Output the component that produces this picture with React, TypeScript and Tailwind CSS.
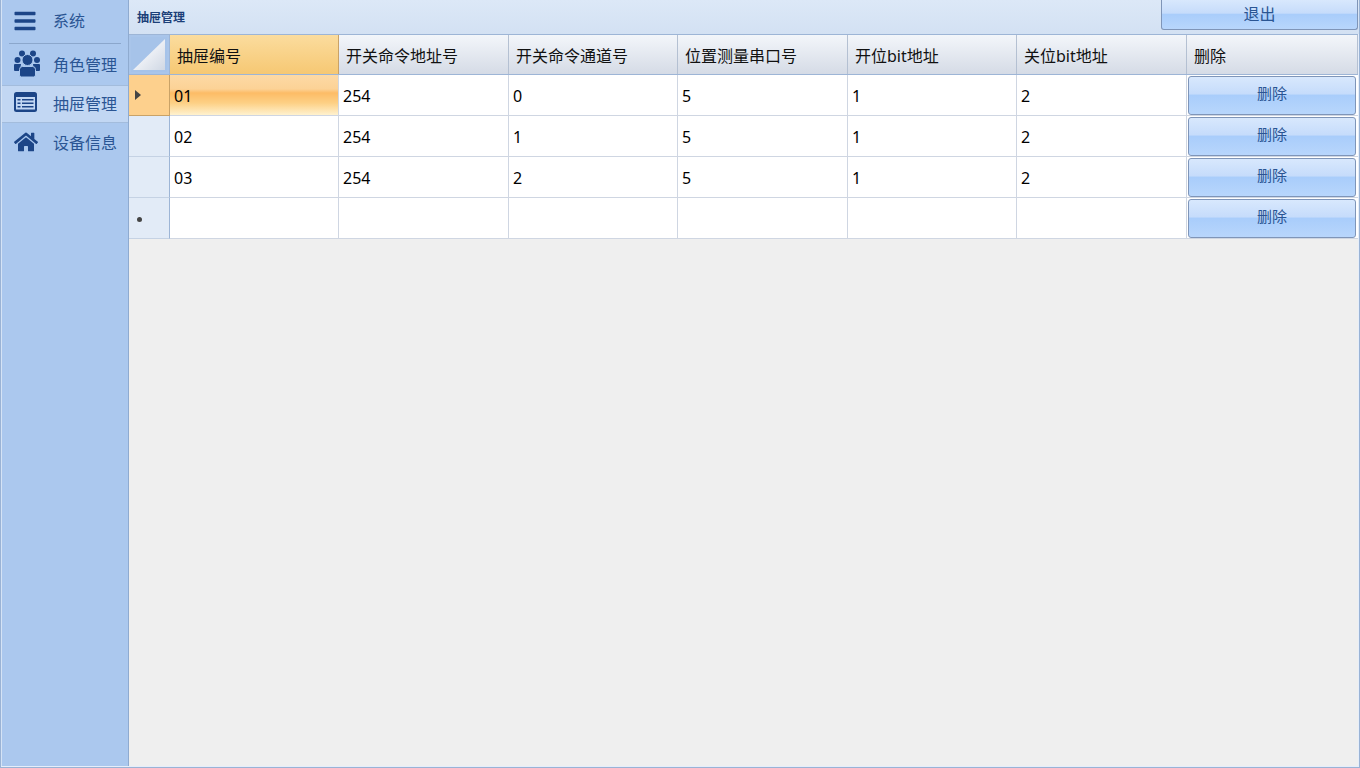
import { FaBars, FaHome } from "react-icons/fa";
import type { ReactNode } from "react";

const columns = ["抽屉编号", "开关命令地址号", "开关命令通道号", "位置测量串口号", "开位bit地址", "关位bit地址", "删除"];

const rows = [
  ["01", "254", "0", "5", "1", "2"],
  ["02", "254", "1", "5", "1", "2"],
  ["03", "254", "2", "5", "1", "2"],
  ["", "", "", "", "", ""],
];

const gridCols = "grid grid-cols-[41px_169px_170px_169px_170px_169px_170px_171px]";

// ── Icons ───────────────────────────────────────────────────────────────────

function UsersIcon() {
  return (
    <svg width="26" height="27" viewBox="0 0 26 27" fill="currentColor">
      <circle cx="8" cy="3.5" r="3" />
      <circle cx="19" cy="3.5" r="3" />
      <circle cx="3.5" cy="10" r="3" />
      <circle cx="23" cy="10" r="3" />
      <circle cx="13.5" cy="10" r="5.5" stroke="#abc8ee" strokeWidth="1" />
      <path d="M1 14h6l-1 7H1a1 1 0 0 1-1-1v-5a1 1 0 0 1 1-1zM20 14h5a1 1 0 0 1 1 1v5a1 1 0 0 1-1 1h-5l-1-7z" />
      <path d="M8.5 16.5h10a3 3 0 0 1 3 3V25a2 2 0 0 1-2 2h-12a2 2 0 0 1-2-2v-5.500a3 3 0 0 1 3-3z" stroke="#abc8ee" strokeWidth="1" />
    </svg>
  );
}

function ListCardIcon() {
  return (
    <svg width="23" height="20" viewBox="0 0 23 20">
      <rect width="23" height="20" rx="2.500" fill="currentColor" />
      <rect x="2" y="5" width="19" height="12.500" fill="#c2d7f3" />
      <path d="M3.500 7h3v1.500h-3zM3.500 10.500h3V12h-3zM3.500 14h3v1.500h-3zM8 7h11.500v1.500H8zM8 10.500h11.500V12H8zM8 14h11.500v1.500H8z" fill="currentColor" />
    </svg>
  );
}

// ── Sidebar ─────────────────────────────────────────────────────────────────

function NavItem({ icon, label, active, className }: { icon: ReactNode; label: string; active?: boolean; className: string }) {
  return (
    <div className={`flex pl-[11px] ${active ? "bg-[#c2d7f3]" : ""} ${className}`}>
      <div className="w-[40px] pl-[1px] text-[#1c4587]">{icon}</div>
      <span className="text-base leading-[22px] text-[#2a5593]">{label}</span>
    </div>
  );
}

function Sidebar() {
  return (
    <div className="w-[128px] shrink-0 border-r border-l border-r-[#8fabd0] border-l-[#d5e3f5] bg-[#abc8ee]">
      <NavItem className="h-[43px] pt-[10px]" icon={<FaBars className="-mt-[1px] h-[24px] w-[22px]" />} label="系统" />
      <div className="mx-[7px] h-px bg-[#8ba7cc]" />
      <NavItem className="h-[41px] pt-[10px]" icon={<div className="-mt-[4px]"><UsersIcon /></div>} label="角色管理" />
      <NavItem active className="h-[38px] border-y border-[#a3bcdc] pt-[7px]" icon={<div className="-mt-[1px]"><ListCardIcon /></div>} label="抽屉管理" />
      <NavItem className="h-[40px] pt-[9px]" icon={<FaHome className="-mt-[2px] h-[24px] w-[24px]" />} label="设备信息" />
    </div>
  );
}

// ── Table ───────────────────────────────────────────────────────────────────

function DeleteButton() {
  return (
    <button className="h-[39px] w-[168px] rounded-[3px] border border-[#7f95b8] bg-[linear-gradient(to_bottom,#d8e8fd_0%,#c6dcfb_45%,#a9cdfb_50%,#b8d6fc_100%)] pb-[3px] text-[15px] text-[#2a5593]">
      删除
    </button>
  );
}

function HeaderRow() {
  return (
    <div className={`${gridCols} h-[41px] border-y border-[#9db5d6]`}>
      <div className="flex items-center justify-center border-r border-[#9db5d6] bg-[#a9c5ea] p-[2px]">
        <svg width="36" height="35" viewBox="0 0 36 35">
          <defs>
            <linearGradient id="corner" x1="0" y1="0" x2="1" y2="1">
              <stop offset="0.4" stopColor="#f2f4f8" />
              <stop offset="1" stopColor="#cfd7e4" />
            </linearGradient>
          </defs>
          <rect width="36" height="35" fill="#a6c3e9" />
          <polygon points="34,2 34,33 2,33" fill="url(#corner)" />
        </svg>
      </div>
      {columns.map((col, i) => (
        <div
          key={col}
          className={`border-r pt-[9px] pl-[7px] text-base leading-[24px] text-[#111] ${
            i === 0
              ? "border-[#c9a267] bg-[linear-gradient(to_bottom,#fbdc9e,#f6c873)]"
              : "border-[#b4c0d2] bg-[linear-gradient(to_bottom,#f3f6fa,#d5dbe6)]"
          }`}
        >
          {col}
        </div>
      ))}
    </div>
  );
}

function DataRow({ cells, index }: { cells: string[]; index: number }) {
  const selected = index === 0;
  const isNew = index === rows.length - 1;
  return (
    <div className={`${gridCols} h-[41px]`}>
      <div
        className={`flex items-center border-r border-b pl-[5px] ${
          selected ? "border-[#c9a267] bg-[#fdd08d]" : "border-[#c5d2e4] bg-[#e2ebf7] border-r-[#9db5d6]"
        }`}
      >
        {selected && <div className="ml-[1px] h-0 w-0 border-y-[5px] border-l-[6px] border-y-transparent border-l-[#444]" />}
        {isNew && <div className="mt-[3px] ml-[3px] h-[5px] w-[5px] rounded-full bg-[#444]" />}
      </div>
      {cells.map((cell, i) => (
        <div
          key={i}
          className={`border-r border-b border-[#cfd6e2] pt-[9px] pl-[4px] text-base leading-[24px] text-black ${
            selected && i === 0 ? "bg-[linear-gradient(to_bottom,#fdd9a5_0%,#fcd296_35%,#fdbc66_45%,#fdd085_70%,#fff2cf_100%)]" : "bg-white"
          }`}
        >
          {cell}
        </div>
      ))}
      <div className="flex items-center justify-start border-b border-[#cfd6e2] bg-white pl-[1px]">
        <DeleteButton />
      </div>
    </div>
  );
}

export default function App() {
  return (
    <div
      className="h-[768px] w-[1360px] overflow-hidden border-x border-b border-[#9ab3d5] bg-[#e6eefa]"
      style={{ fontFamily: '"Noto Sans", "Noto Sans CJK SC", sans-serif' }}
    >
      <div className="flex h-[766px]">
        <Sidebar />
        <div className="flex min-w-0 flex-1 flex-col">
          <div className="flex h-[34px] shrink-0 justify-between bg-[linear-gradient(to_bottom,#dce8f7,#d3e1f3)] pl-[8px]">
            <span className="pt-[10px] text-xs leading-[16px] font-bold text-[#1c3f78]">抽屉管理</span>
            <button className="mr-[1px] h-[30px] w-[197px] rounded-b-[3px] border border-t-0 border-[#7f95b8] bg-[linear-gradient(to_bottom,#d8e8fd_0%,#c6dcfb_45%,#a9cdfb_50%,#b8d6fc_100%)] pb-[2px] text-base text-[#2a5593]">
              退出
            </button>
          </div>
          <div className="w-[1229px]">
            <HeaderRow />
            {rows.map((cells, i) => (
              <DataRow key={i} cells={cells} index={i} />
            ))}
          </div>
          <div className="mr-[1px] flex-1 bg-[#efefef]" />
        </div>
      </div>
    </div>
  );
}
